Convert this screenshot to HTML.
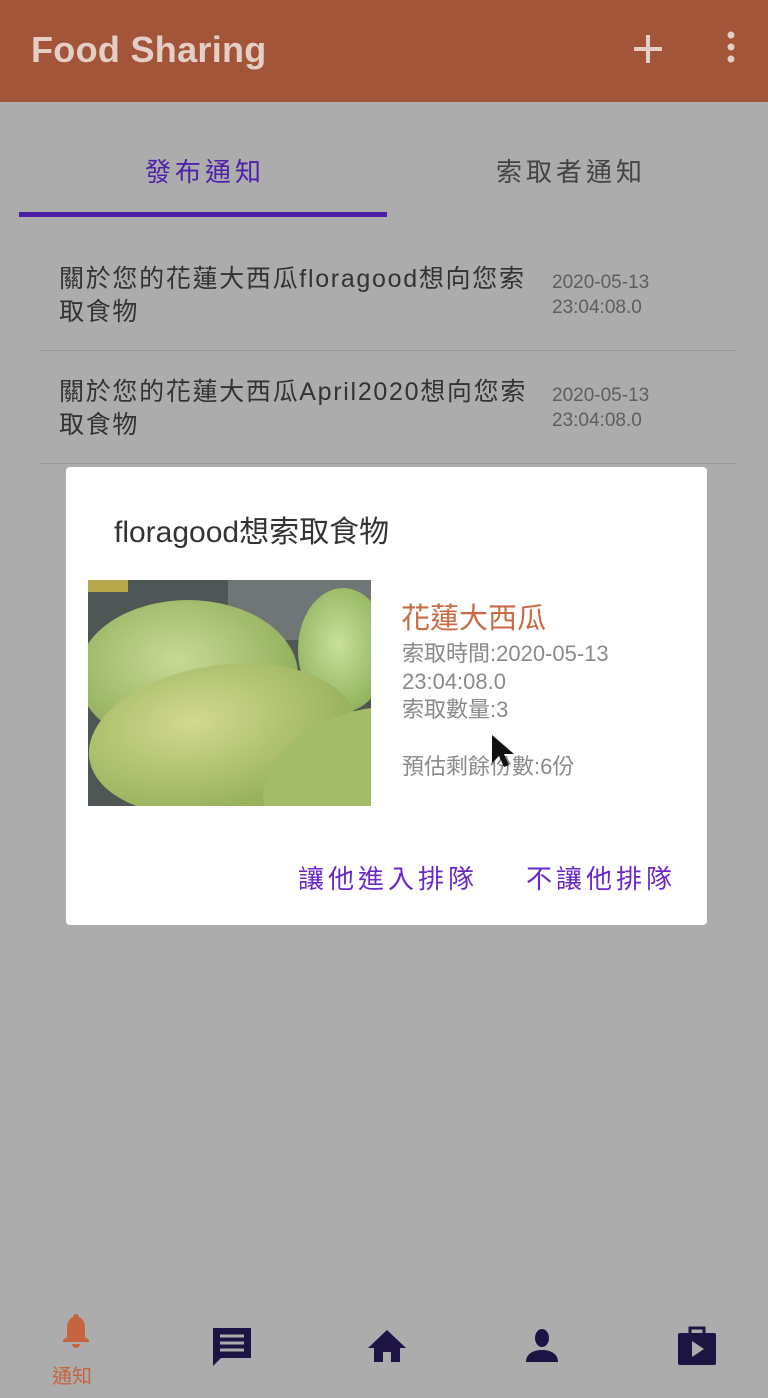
<!DOCTYPE html>
<html><head><meta charset="utf-8"><style>
*{margin:0;padding:0;box-sizing:border-box}
body{width:768px;height:1398px;background:#acacac;font-family:"Liberation Sans","Noto Sans CJK TC",sans-serif;position:relative;overflow:hidden}
.hdr{position:absolute;left:0;top:0;width:768px;height:102px;background:#a3553a}
.hdr .t{position:absolute;left:31px;top:29px;font-size:36px;font-weight:bold;color:#e4cfc6;letter-spacing:0.3px}
.abs{position:absolute}
.tab{position:absolute;top:152px;font-size:26px;letter-spacing:4px}
.item{position:absolute;left:59px;font-size:25px;color:#333;line-height:33px;width:490px;white-space:nowrap;letter-spacing:1.7px}
.date{position:absolute;left:552px;font-size:19px;color:#5e5e5e;line-height:25px;letter-spacing:0px}
.sep{position:absolute;left:40px;width:696px;height:1px;background:#999}
.dlg{position:absolute;left:66px;top:467px;width:641px;height:458px;background:#fff;border-radius:4px}
.info{position:absolute;left:336px;font-size:22px;color:#8a8a8a;line-height:28px}
.btn{position:absolute;top:392px;font-size:26px;color:#6a28c9;letter-spacing:4px}
</style></head><body>
<div class="hdr"><div class="t">Food Sharing</div>
<svg class="abs" style="left:632px;top:33px" width="32" height="32"><path d="M16 2v28M2 16h28" stroke="#e4cfc6" stroke-width="4"/></svg>
<svg class="abs" style="left:724px;top:30px" width="14" height="36"><circle cx="7" cy="5" r="3.5" fill="#e4cfc6"/><circle cx="7" cy="17" r="3.5" fill="#e4cfc6"/><circle cx="7" cy="29" r="3.5" fill="#e4cfc6"/></svg>
</div>
<div class="tab" style="left:145px;color:#4e22a8">發布通知</div>
<div class="tab" style="left:496px;color:#444">索取者通知</div>
<div class="abs" style="left:19px;top:212px;width:368px;height:5px;background:#4b1ca6"></div>
<div class="item" style="top:263px">關於您的花蓮大西瓜floragood想向您索<br>取食物</div>
<div class="date" style="top:270px">2020-05-13<br>23:04:08.0</div>
<div class="sep" style="top:350px"></div>
<div class="item" style="top:376px">關於您的花蓮大西瓜April2020想向您索<br>取食物</div>
<div class="date" style="top:383px">2020-05-13<br>23:04:08.0</div>
<div class="sep" style="top:463px"></div>
<div class="dlg">
<div class="abs" style="left:48px;top:40px;font-size:30px;color:#333">floragood想索取食物</div>
<svg class="abs" style="left:22px;top:113px" width="283" height="226">
<defs><radialGradient id="g1" cx="45%" cy="40%" r="60%"><stop offset="0" stop-color="#c8d995"/><stop offset="1" stop-color="#8fae5a"/></radialGradient>
<radialGradient id="g2" cx="40%" cy="35%" r="60%"><stop offset="0" stop-color="#d2d98f"/><stop offset="1" stop-color="#98b25c"/></radialGradient>
<radialGradient id="g3" cx="45%" cy="45%" r="60%"><stop offset="0" stop-color="#c8e09a"/><stop offset="1" stop-color="#8db05a"/></radialGradient></defs>
<rect width="283" height="226" fill="#505555"/>
<rect x="140" y="0" width="143" height="60" fill="#707575"/>
<rect x="0" y="0" width="40" height="12" fill="#b7a64a"/>
<ellipse cx="100" cy="95" rx="110" ry="75" fill="url(#g1)"/>
<ellipse cx="255" cy="70" rx="45" ry="62" fill="url(#g3)"/>
<ellipse cx="135" cy="160" rx="135" ry="75" fill="url(#g2)" transform="rotate(-8 135 160)"/>
<ellipse cx="265" cy="195" rx="95" ry="60" fill="#a3bc6a" transform="rotate(-25 265 195)"/>
</svg>
<div class="abs" style="left:335px;top:128px;font-size:29px;color:#c96a45">花蓮大西瓜</div>
<div class="info" style="top:173px">索取時間:2020-05-13<br>23:04:08.0<br>索取數量:3</div>
<div class="info" style="top:286px">預估剩餘份數:6份</div>
<svg class="abs" style="left:424px;top:266px" width="24" height="36"><path d="M2 2v28l7-7 5 11 5-2-5-11h10z" fill="#111"/></svg>
<div class="btn" style="left:232px">讓他進入排隊</div>
<div class="btn" style="left:460px">不讓他排隊</div>
</div>
<svg class="abs" style="left:60px;top:1312px" width="32" height="42"><path d="M16 2c2 0 3 2 3 3 5 2 6 7 6 12v8l4 3v2H3v-2l4-3v-8c0-5 1-10 6-12 0-1 1-3 3-3zM12 32h8a4 4 0 0 1-8 0z" fill="#c5653f"/></svg>
<div class="abs" style="left:52px;top:1360px;font-size:20px;color:#c5653f">通知</div>
<svg class="abs" style="left:211px;top:1326px" width="42" height="42"><path d="M2 2h38v30H10l-8 8z" fill="#1d1443"/><path d="M9 10h24M9 17h24M9 24h24" stroke="#acacac" stroke-width="3"/></svg>
<svg class="abs" style="left:366px;top:1328px" width="42" height="36"><path d="M21 2L2 20h6v14h9v-10h8v10h9V20h6z" fill="#1d1443"/></svg>
<svg class="abs" style="left:524px;top:1328px" width="36" height="36"><ellipse cx="18" cy="10" rx="7" ry="9" fill="#1d1443"/><path d="M2 34c0-8 7-12 16-12s16 4 16 12z" fill="#1d1443"/></svg>
<svg class="abs" style="left:676px;top:1325px" width="42" height="42"><rect x="2" y="8" width="38" height="32" rx="2" fill="#1d1443"/><path d="M14 9V3h14v6" stroke="#1d1443" stroke-width="3" fill="none"/><path d="M16 16v16l12-8z" fill="#acacac"/></svg>
</body></html>
